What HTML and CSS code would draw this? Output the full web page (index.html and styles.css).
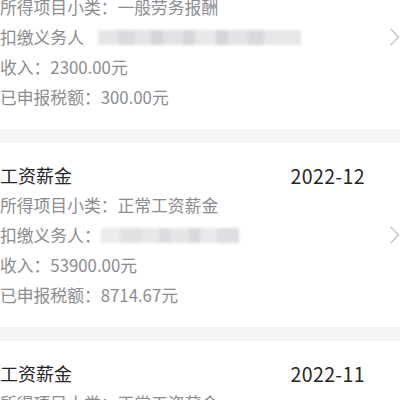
FILE: index.html
```html
<!DOCTYPE html>
<html lang="zh">
<head>
<meta charset="utf-8">
<link rel="stylesheet" href="styles.css">
</head>
<body>
<div class="list">
  <div class="card">
    <div class="head"><span class="title">劳务报酬</span><span class="date">2023-01</span></div>
    <div class="row">所得项目小类：一般劳务报酬</div>
    <div class="row">扣缴义务人<span class="blur b1"></span></div>
    <div class="row">收入：2300.00元</div>
    <div class="row">已申报税额：300.00元</div>
    <svg class="chev" viewBox="0 0 10 18"><path d="M1.5 1.5 L8.5 9 L1.5 16.5" /></svg>
  </div>
  <div class="card">
    <div class="head"><span class="title">工资薪金</span><span class="date">2022-12</span></div>
    <div class="row">所得项目小类：正常工资薪金</div>
    <div class="row">扣缴义务人：<span class="blur b2"></span></div>
    <div class="row">收入：53900.00元</div>
    <div class="row">已申报税额：8714.67元</div>
    <svg class="chev" viewBox="0 0 10 18"><path d="M1.5 1.5 L8.5 9 L1.5 16.5" /></svg>
  </div>
  <div class="card">
    <div class="head"><span class="title">工资薪金</span><span class="date">2022-11</span></div>
    <div class="row">所得项目小类：正常工资薪金</div>
    <div class="row">扣缴义务人：<span class="blur b2"></span></div>
    <div class="row">收入：53900.00元</div>
    <div class="row">已申报税额：8714.67元</div>
    <svg class="chev" viewBox="0 0 10 18"><path d="M1.5 1.5 L8.5 9 L1.5 16.5" /></svg>
  </div>
</div>
</body>
</html>
```

FILE: styles.css
```css
html, body {
  margin: 0;
  padding: 0;
  background: #ffffff;
  overflow: hidden;
}
body {
  font-family: "Noto Sans CJK SC", "Noto Sans", sans-serif;
}
.list {
  margin-top: -55px;
  display: flex;
  flex-direction: column;
  gap: 14px;
  background: #f4f5f7;
}
.card {
  position: relative;
  background: #ffffff;
  padding: 17px 35px 17px 0;
}
.head {
  display: flex;
  justify-content: space-between;
  align-items: center;
  height: 30px;
  color: #262626;
}
.title {
  font-size: 18px;
}
.date {
  font-size: 19.5px;
  letter-spacing: 0.4px;
}
.row {
  height: 30px;
  line-height: 30px;
  font-size: 16.8px;
  color: #8c8c90;
  white-space: nowrap;
  display: flex;
  align-items: center;
}
.blur {
  display: inline-block;
  height: 15px;
  filter: blur(1.5px);
}
.b1 {
  margin-left: 14px;
  width: 203px;
  background: linear-gradient(90deg,
    #e6e6e9 0 10%, #dadade 10% 18%, #e4e4e7 18% 26%, #d3d3d8 26% 32%,
    #e2e2e5 32% 42%, #d7d7db 42% 48%, #e8e8ea 48% 58%, #d5d5d9 58% 64%,
    #e3e3e6 64% 74%, #d9d9dd 74% 82%, #e7e7ea 82% 100%);
}
.b2 {
  margin-left: 0;
  width: 138px;
  background: linear-gradient(90deg,
    #ececee 0 14%, #e1e1e4 14% 30%, #e8e8ea 30% 42%, #dcdce0 42% 50%,
    #e6e6e9 50% 64%, #d9d9dd 64% 72%, #e9e9eb 72% 84%, #dedee2 84% 100%);
}
.chev {
  position: absolute;
  right: 0;
  top: 50%;
  width: 11px;
  height: 20px;
  margin-top: -10px;
  fill: none;
  stroke: #c2c2c5;
  stroke-width: 1.2;
}
```
